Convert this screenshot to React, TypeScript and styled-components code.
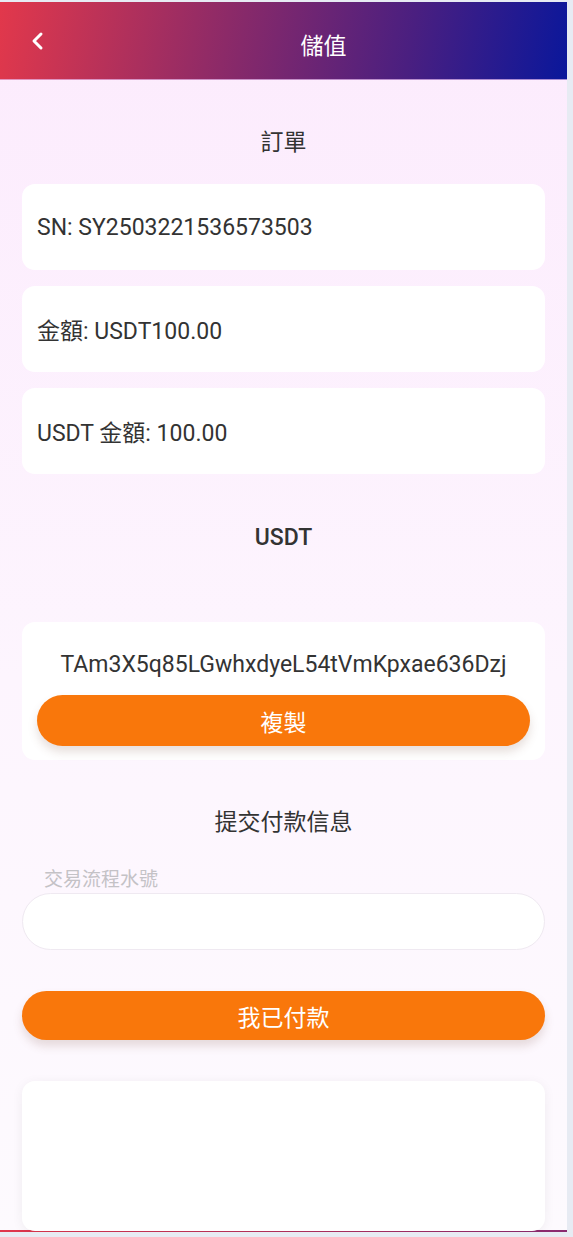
import React from "react"
import styled, { createGlobalStyle } from "styled-components"

const GlobalStyle = createGlobalStyle`
  html, body {
    margin: 0;
    padding: 0;
    background: #e7ebf3;
    font-family: Roboto, "Noto Sans CJK TC", "Noto Sans", sans-serif;
    color: #333;
  }
  * { box-sizing: border-box; }
`

const Screen = styled.div`
  width: 567px;
  height: 1237px;
  padding-top: 2px;
  overflow: hidden;
`

const Page = styled.div`
  height: 1230px;
  overflow: hidden;
  display: flex;
  flex-direction: column;
  background:
    linear-gradient(90deg, #e0364c, #8a2a70) bottom / 100% 2px no-repeat,
    linear-gradient(180deg, #fcebfd 0%, #fdf5fe 55%, #fdfafe 100%);
`

const Header = styled.header`
  height: 78px;
  flex-shrink: 0;
  display: flex;
  align-items: center;
  background: linear-gradient(100deg, #e2384b 0%, #8c2a68 40%, #4a1f80 72%, #0a179b 100%);
  border-bottom: 1px solid rgba(230, 190, 240, 0.7);
`

const BackButton = styled.button`
  width: 80px;
  height: 78px;
  border: none;
  background: transparent;
  padding: 0 0 0 30px;
  display: flex;
  align-items: center;
  cursor: pointer;
`

const Title = styled.h1`
  flex: 1;
  margin: 0;
  padding-top: 6px;
  text-align: center;
  font-size: 23px;
  font-weight: 400;
  color: #fff;
`

const Content = styled.main`
  display: flex;
  flex-direction: column;
  padding: 0 22px;
`

const SectionTitle = styled.h2<{ $top: number; $bold?: boolean }>`
  margin: ${({ $top }) => $top}px 0 0;
  height: 30px;
  line-height: 30px;
  text-align: center;
  font-size: 23px;
  font-weight: ${({ $bold }) => ($bold ? 500 : 400)};
  color: #333;
`

const InfoCard = styled.div<{ $top: number }>`
  margin-top: ${({ $top }) => $top}px;
  height: 86px;
  background: #fff;
  border-radius: 13px;
  display: flex;
  align-items: center;
  padding: 0 15px;
  font-size: 23px;
  color: #333;
`

const AddressCard = styled.div`
  margin-top: 69px;
  height: 138px;
  background: #fff;
  border-radius: 13px;
  display: flex;
  flex-direction: column;
  align-items: center;
  padding: 28px 15px 0;
`

const Address = styled.div`
  font-size: 23px;
  line-height: 30px;
  color: #333;
`

const PillButton = styled.button<{ $height: number; $top: number }>`
  width: 100%;
  height: ${({ $height }) => $height}px;
  margin-top: ${({ $top }) => $top}px;
  flex-shrink: 0;
  border: none;
  border-radius: 999px;
  background: #f9770b;
  color: #fff;
  font-family: inherit;
  font-size: 23px;
  box-shadow: 0 6px 10px rgba(120, 80, 60, 0.18);
  cursor: pointer;
`

const FieldLabel = styled.label`
  margin-top: 29px;
  padding-left: 22px;
  font-size: 19px;
  line-height: 26px;
  color: #c4c2c6;
`

const TextField = styled.input`
  height: 57px;
  width: 100%;
  flex-shrink: 0;
  border: 1px solid #efe9f1;
  border-radius: 29px;
  background: #fff;
  padding: 0 22px;
  font-size: 19px;
  font-family: inherit;
  outline: none;
`

const EmptyCard = styled.div`
  margin-top: 41px;
  height: 150px;
  background: #fff;
  border-radius: 13px;
  box-shadow: 0 2px 12px rgba(0, 0, 0, 0.06);
  flex-shrink: 0;
`

export default function App() {
  return (
    <>
      <GlobalStyle />
      <Screen>
        <Page>
          <Header>
            <BackButton aria-label="back">
              <svg width="16" height="20" viewBox="0 0 16 20">
                <path d="M11 3 L4 10 L11 17" fill="none" stroke="#fff" strokeWidth="3" strokeLinecap="round" strokeLinejoin="round" />
              </svg>
            </BackButton>
            <Title>儲值</Title>
          </Header>
          <Content>
            <SectionTitle $top={48}>訂單</SectionTitle>
            <InfoCard $top={26}>SN: SY2503221536573503</InfoCard>
            <InfoCard $top={16}>金額: USDT100.00</InfoCard>
            <InfoCard $top={16}>USDT 金額: 100.00</InfoCard>
            <SectionTitle $top={49} $bold>USDT</SectionTitle>
            <AddressCard>
              <Address>TAm3X5q85LGwhxdyeL54tVmKpxae636Dzj</Address>
              <PillButton $height={51} $top={15}>複製</PillButton>
            </AddressCard>
            <SectionTitle $top={48}>提交付款信息</SectionTitle>
            <FieldLabel>交易流程水號</FieldLabel>
            <TextField />
            <PillButton $height={49} $top={41}>我已付款</PillButton>
            <EmptyCard />
          </Content>
        </Page>
      </Screen>
    </>
  )
}
